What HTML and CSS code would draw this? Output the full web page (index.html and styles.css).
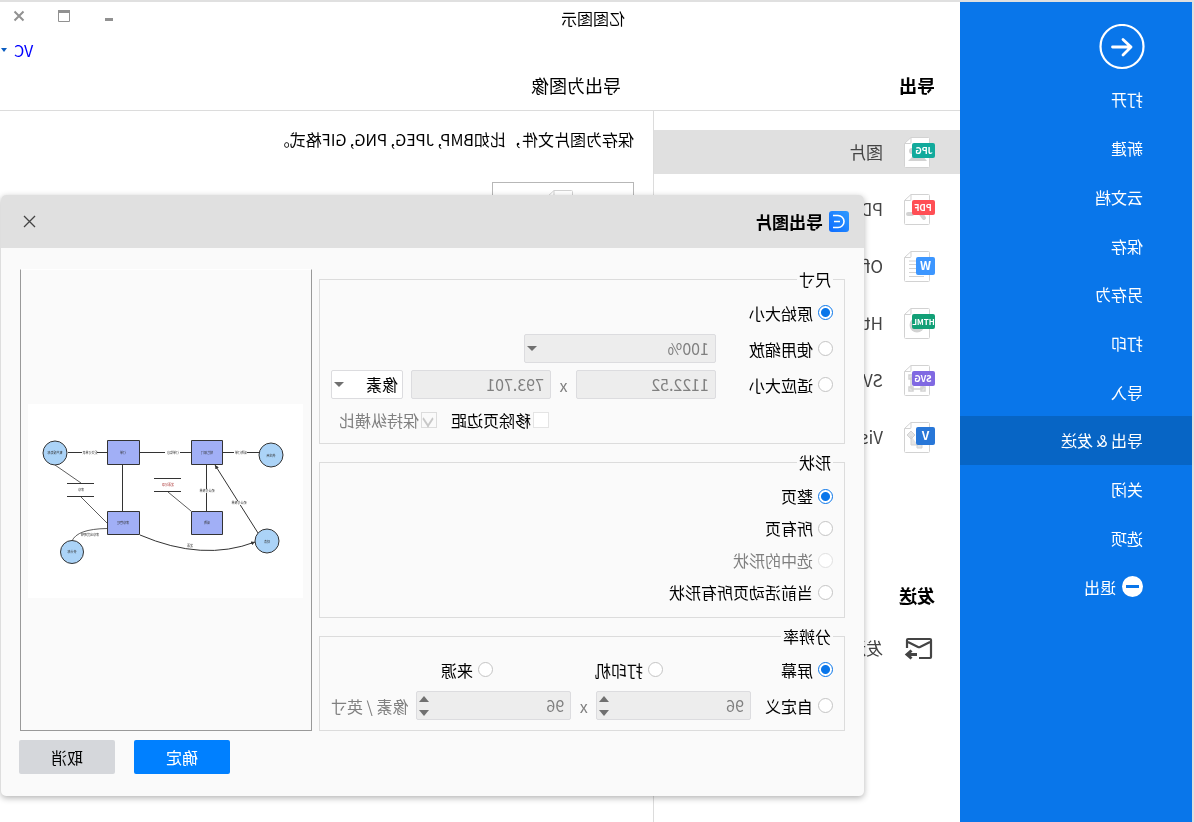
FILE: index.html
```
<!DOCTYPE html>
<html lang="zh-CN">
<head>
<meta charset="utf-8">
<title>亿图图示</title>
<link rel="stylesheet" href="styles.css">
</head>
<body>
<svg class="defs" aria-hidden="true">
  <symbol id="sheet" viewBox="0 0 31 31">
    <path d="M6.500 .5H24L30.500 6.500V29.500a1 1 0 0 1-1 1H6.500a1 1 0 0 1-1-1V1.500a1 1 0 0 1 1-1z" fill="#fff" stroke="#d2d2d2"/>
    <path d="M24 .5V5.500a1 1 0 0 0 1 1H30.500" fill="none" stroke="#d2d2d2"/>
  </symbol>
</svg>
<div class="window">
  <nav class="sidebar">
    <button class="back" aria-label="返回">
      <svg viewBox="0 0 46 46" width="46" height="46" fill="none" stroke="#fff"><circle cx="23" cy="22.500" r="21.500" stroke-width="2.200"/><path d="M32.500 23H14M22 15.500l-8 7.500L22 31" stroke-width="2.800" stroke-linecap="round" stroke-linejoin="round"/></svg>
    </button>
    <div class="menu">
      <a href="#">打开</a>
      <a href="#">新建</a>
      <a href="#">云文档</a>
      <a href="#">保存</a>
      <a href="#">另存为</a>
      <a href="#">打印</a>
      <a href="#">导入</a>
      <a href="#" class="active">导出 &amp; 发送</a>
      <a href="#">关闭</a>
      <a href="#">选项</a>
      <a href="#"><svg width="21" height="21" viewBox="0 0 21 21"><circle cx="10.500" cy="10.500" r="10.500" fill="#fff"/><path d="M4 10.500h13" stroke="#0976ea" stroke-width="3"/></svg>退出</a>
    </div>
  </nav>
  <div class="main">
    <header class="top">
      <div class="titlebar">
        <span>亿图图示</span>
        <div class="controls">
          <button aria-label="最小化"><svg width="12" height="12" viewBox="0 0 12 12"><path d="M2 9.500h8" stroke="#919191" stroke-width="3"/></svg></button>
          <button aria-label="最大化"><svg width="12" height="12" viewBox="0 0 12 12"><path d="M.5 1v10.500h11V1" fill="none" stroke="#919191"/><path d="M0 1.500h12" stroke="#919191" stroke-width="3"/></svg></button>
          <button aria-label="关闭"><svg width="12" height="12" viewBox="0 0 12 12"><path d="M1.500 1.500l9 9M10.500 1.500l-9 9" stroke="#919191" stroke-width="2"/></svg></button>
        </div>
      </div>
      <div class="account"><a href="#">VC</a><i class="tri"></i></div>
      <div class="headings"><h2>导出</h2><h1>导出为图像</h1></div>
    </header>
    <div class="content">
      <div class="formats">
        <a href="#" class="format active">
          <svg width="31" height="31" viewBox="0 0 31 31"><use href="#sheet"/><path d="M8 24l5-6 4 3 4-3 6 6z" fill="#d2d2d2"/><circle cx="23" cy="14" r="3" fill="#d2d2d2"/><rect y="6" width="23" height="15" rx="2" fill="#12aa9c"/><text x="11" y="17">JPG</text></svg>图片</a>
        <a href="#" class="format">
          <svg width="31" height="31" viewBox="0 0 31 31"><use href="#sheet"/><path d="M11 24l3-4M23 20h4" fill="none" stroke="#d2d2d2" stroke-width="4" stroke-linecap="round"/><rect y="6" width="23" height="15" rx="2" fill="#ff4f55"/><text x="12" y="17">PDF</text></svg>PDF</a>
        <a href="#" class="format">
          <svg width="31" height="31" viewBox="0 0 31 31"><use href="#sheet"/><path d="M11 10h15M11 13.500h15M11 17.500h15M11 21.500h15M11 25.500h15" stroke="#d2d2d2"/><rect y="6" width="19" height="18" rx="2" fill="#3c96ff"/><text x="9.500" y="18.500" class="big">W</text></svg>Office</a>
        <a href="#" class="format">
          <svg width="31" height="31" viewBox="0 0 31 31"><use href="#sheet"/><circle cx="18" cy="17" r="7.500" fill="#d2d2d2"/><rect y="6" width="23" height="15" rx="2" fill="#12a077"/><text x="11.500" y="17" class="small">HTML</text></svg>Html</a>
        <a href="#" class="format">
          <svg width="31" height="31" viewBox="0 0 31 31"><use href="#sheet"/><path d="M12 12h12v12H12zM10 22h4v4h-4zM22 22h4v4h-4zM22 10h4v4h-4z" fill="none" stroke="#d2d2d2" stroke-width="1.500"/><rect y="6" width="23" height="15" rx="2" fill="#8069e2"/><text x="12" y="17">SVG</text></svg>SVG</a>
        <a href="#" class="format">
          <svg width="31" height="31" viewBox="0 0 31 31"><use href="#sheet"/><path d="M24 9l4 4-4 4-4-4zM13 22h5v4h-5zM24 14v9h-7" fill="#d2d2d2" stroke="#d2d2d2" fill-opacity=".6"/><rect y="5" width="19" height="18" rx="2" fill="#2877d8"/><text x="9.500" y="18" class="big">V</text></svg>Visio</a>
        <h2>发送</h2>
        <a href="#" class="format">
          <svg width="31" height="31" viewBox="0 0 31 31" fill="none" stroke="#444" stroke-width="2.200"><path d="M16 25H5a1 1 0 0 1-1-1V7a1 1 0 0 1 1-1h22a1 1 0 0 1 1 1v8M5 9l10 5q1 .5 2 0l10-5"/><path d="M18 21.500h10M23.500 17.500l4.500 4-4.500 4" stroke-width="3"/></svg>发送</a>
      </div>
      <section class="detail">
        <p>保存为图片文件，比如BMP, JPEG, PNG, GIF格式。</p>
        <button class="tile" aria-label="图片"><svg width="31" height="31"><use href="#sheet" width="31" height="31"/></svg></button>
      </section>
    </div>
  </div>

  <form class="dialog" role="dialog" aria-label="导出图片">
    <header>
      <svg width="20" height="21" viewBox="0 0 20 21"><defs><linearGradient id="lg" x1="0" y1="0" x2="1" y2="1"><stop stop-color="#2f9bff"/><stop offset="1" stop-color="#0d6bff"/></linearGradient></defs><rect width="20" height="21" rx="3" fill="url(#lg)"/><path d="M16 4.500h-5a6 6 0 0 0 0 12H16M9 10.500h6" fill="none" stroke="#fff" stroke-width="1.600"/></svg>
      <h3>导出图片</h3>
      <button type="button" aria-label="关闭"><svg width="13" height="13" viewBox="0 0 13 13"><path d="M1 1l11 11M12 1L1 12" stroke="#444" stroke-width="1.300"/></svg></button>
    </header>
    <div class="panes">
      <div class="groups">
        <fieldset class="size">
          <legend>尺寸</legend>
          <div class="row"><label><input type="radio" name="size" checked>原始大小</label></div>
          <div class="row"><label><input type="radio" name="size">使用缩放</label><span class="drop zoom"><select disabled aria-label="缩放"><option>100%</option></select></span></div>
          <div class="row"><label><input type="radio" name="size">适应大小</label><input type="text" disabled value="1122.52" aria-label="宽度"><span class="by">x</span><input type="text" disabled value="793.701" aria-label="高度"><span class="drop unit"><select aria-label="单位"><option>像素</option></select></span></div>
          <div class="row checks"><label><input type="checkbox">移除页边距</label><label class="off"><input type="checkbox" checked disabled>保持纵横比</label></div>
        </fieldset>
        <fieldset class="shape">
          <legend>形状</legend>
          <div class="row"><label><input type="radio" name="shape" checked>整页</label></div>
          <div class="row"><label><input type="radio" name="shape">所有页</label></div>
          <div class="row"><label class="off"><input type="radio" name="shape" disabled>选中的形状</label></div>
          <div class="row"><label><input type="radio" name="shape">当前活动页所有形状</label></div>
        </fieldset>
        <fieldset class="dpi">
          <legend>分辨率</legend>
          <div class="row sources"><label><input type="radio" name="dpi" checked>屏幕</label><label><input type="radio" name="dpi">打印机</label><label><input type="radio" name="dpi">来源</label></div>
          <div class="row"><label><input type="radio" name="dpi">自定义</label><span class="spin"><input type="number" disabled value="96" aria-label="水平分辨率"></span><span class="by">x</span><span class="spin"><input type="number" disabled value="96" aria-label="垂直分辨率"></span><span class="per">像素 / 英寸</span></div>
        </fieldset>
      </div>
      <div class="preview">
        <svg viewBox="0 0 275 194" fill="none" stroke="#333">
          <defs><marker id="tip" viewBox="0 0 4 4" refX="4" refY="2" markerWidth="4" markerHeight="4" orient="auto"><path d="M0 0l4 2-4 2z" fill="#333" stroke="none"/></marker></defs>
          <rect width="275" height="194" fill="#fff" stroke="none"/>
          <path d="M235 48.500H196M163 48.500H112M80 48.500H44"/>
          <path d="M180.500 61V107M96.500 61V107M45 129L88 61" marker-end="url(#tip)"/>
          <path d="M209 79.500h27M209 92.500h27M122 74.500h27M122 87.500h27"/>
          <path d="M248 61L222 79M222 93L196 119M135 88L112 107" stroke-width=".8"/>
          <path d="M163 131Q100 158 48 138" marker-end="url(#tip)"/>
          <path d="M231 137Q226 125 196 124.500" stroke-width=".8"/>
          <g fill="#a1aff6"><path d="M163.500 36.500h32v24h-32zM80.500 36.500h31v24h-31zM163.500 107.500h32v23h-32zM80.500 107.500h31v23h-31z"/></g>
          <g fill="#abd3f7"><circle cx="248" cy="49" r="12"/><circle cx="32" cy="51" r="12"/><circle cx="36" cy="137" r="12"/><circle cx="231" cy="148" r="11.500"/></g>
          <g stroke="none" fill="#fff"><path d="M206 47h15v4h-15zM123 47h15v4h-15zM56 47h13v4H56zM89 85h15v4H89zM57 97h14v4H57z"/></g>
          <g class="tiny">
            <text x="248" y="50">客户服务部</text><text x="180" y="50">订单</text><text x="96" y="50">销售部门</text><text x="32" y="53">供应商</text>
            <text x="180" y="120">库存管理</text><text x="96" y="120">采购</text><text x="36" y="139">财务</text><text x="231" y="149">会计部</text>
            <text x="213" y="50">提交订单表</text><text x="130" y="50">订单信息</text><text x="62" y="50">采购订单</text>
            <text x="222" y="87">库存</text><text x="135" y="82" class="red">发票记录</text><text x="96" y="88">确认付款单</text>
            <text x="64" y="100">确认付款单</text><text x="213" y="132">库存出货明细</text><text x="113" y="143">发票</text>
          </g>
        </svg>
      </div>
    </div>
    <footer><button type="button" class="ok">确定</button><button type="button" class="cancel">取消</button></footer>
  </form>
</div>
</body>
</html>
```
FILE: styles.css
```
* { box-sizing: border-box; }
body {
  margin: 0;
  background: #fff;
  color: #000;
  font: 16px/20px "Noto Sans CJK SC", sans-serif;
  overflow: hidden;
}
h1, h2, h3, p { margin: 0; font-size: 18px; line-height: 24px; }
h1 { font-weight: 400; }
a { color: inherit; text-decoration: none; }
button { border: 0; padding: 0; background: none; font: inherit; color: inherit; }
input, select { font: inherit; margin: 0; }
svg { flex: none; display: block; }
.defs { position: absolute; width: 0; height: 0; }

/* Right-to-left mirrored window */
.window {
  position: relative;
  display: flex;
  min-height: 100vh;
  border-top: 2px solid #e0e0e0;
  border-left: 2px solid #e0e0e0;
  transform: scaleX(-1);
}
.sidebar { width: 232px; flex: none; background: #0976ea; color: #fff; padding-top: 22px; }
.back { display: block; margin-left: 47px; }
.menu { display: grid; grid-auto-rows: 1fr; height: 536px; margin-top: 5px; }
.menu a { display: flex; align-items: center; gap: 6px; padding-left: 49px; }
.menu .active { background: #0765c5; }

.main { flex: 1; min-width: 0; display: flex; flex-direction: column; }
.top { border-bottom: 1px solid #dcdcdc; }
.titlebar { display: flex; justify-content: space-between; align-items: center; height: 32px; padding: 0 13px 0 335px; }
.controls { display: flex; gap: 33px; align-items: center; padding-bottom: 4px; }
.account { display: flex; justify-content: flex-end; align-items: center; gap: 7px; height: 32px; padding-right: 1px; color: #00f; }
.tri { border: 3px solid transparent; border-top: 4px solid #0a5cc0; border-bottom: 0; }
.headings { display: grid; grid-template-columns: 314px 1fr; padding: 7px 0 13px 25px; }

.content { flex: 1; display: grid; grid-template-columns: 307px 1fr; }
.formats { border-right: 1px solid #dcdcdc; padding-top: 19px; }
.format { display: flex; align-items: center; gap: 21px; height: 44px; margin-bottom: 13px; padding-left: 25px; font-size: 17px; color: #444; }
.format.active { background: #e0e0e0; }
.format text { font-size: 9px; font-weight: 700; fill: #fff; text-anchor: middle; }
.format .big { font-size: 12px; }
.format .small { font-size: 8px; }
.formats h2 { margin: 124px 0 19px 25px; }
.detail { padding: 18px 19px; }
.detail p { font-size: 16px; line-height: 20px; }
.tile { display: flex; justify-content: center; width: 142px; height: 120px; margin-top: 33px; padding-top: 7px; border: 1px solid #b7b7b7; }

/* Export dialog */
.dialog {
  position: absolute;
  top: 193px;
  left: 328px;
  right: 1px;
  border-radius: 5px;
  background: #fafafa;
  box-shadow: 0 2px 6px rgba(0, 0, 0, .3);
}
.dialog header { display: flex; align-items: center; height: 53px; padding: 0 22px 0 15px; border-radius: 5px 5px 0 0; background: #e0e0e0; }
.dialog h3 { flex: 1; margin-left: 6px; font-size: 17px; }
.panes { display: grid; grid-template-columns: 1fr 292px; gap: 7px; padding: 21px 19px 0; }
.groups { display: grid; gap: 8px; }
fieldset { min-width: 0; margin: 0; padding: 9px 11px 10px 11px; border: 1px solid #dcdcdc; }
legend { padding: 0 2px; }
.row { display: flex; align-items: center; height: 29px; margin-bottom: 7px; }
.row:last-child { margin-bottom: 0; }
.row label { display: flex; align-items: center; gap: 5px; flex: none; }
.size .row label { width: 117px; }
.size .checks { height: 20px; margin: 11px 0 3px; padding-left: 284px; }
.size .checks label { width: 112px; gap: 2px; }
.shape { padding: 8px 11px 9px; }
.shape .row { height: 32px; margin: 0; }
.dpi .row label { width: 82px; }
.dpi .sources label { width: 170px; }
.off, .by, .per { color: #808080; }
.by { width: 25px; flex: none; text-align: center; }
.per { margin-left: 8px; flex: none; }

input[type=radio] { appearance: none; width: 15px; height: 15px; border: 1px solid #c4c4c4; border-radius: 50%; background: #fff; }
input[type=radio]:checked { border-color: #0976ea; background: radial-gradient(circle, #0976ea 4px, #fff 5px); }
input[type=radio]:disabled { border-color: #e0e0e0; background: #fff; }
input[type=checkbox] { appearance: none; position: relative; width: 16px; height: 16px; border: 1px solid #e4e4e4; background: #fff; }
input[type=checkbox]:disabled { border-color: #dcdcdc; background: #fafafa; }
input[type=checkbox]:checked::after { content: ""; position: absolute; left: 3px; top: 1px; width: 8px; height: 8px; border: solid #c8c8c8; border-width: 0 2px 2px 0; transform: rotate(45deg) skew(12deg, 12deg); }
input[type=text], input[type=number], select {
  appearance: none;
  flex: 1;
  min-width: 0;
  width: 100%;
  height: 29px;
  padding: 0 6px 2px;
  border: 1px solid #dcdcdf;
  border-radius: 2px;
  background: #fff;
  color: #000;
}
input[type=number] { appearance: textfield; }
input[type=text]:disabled, input[type=number]:disabled, select:disabled { background: #ededed; color: #808080; opacity: 1; }
.drop, .spin { position: relative; display: flex; }
.drop::after { content: ""; position: absolute; right: 3px; top: 12px; border: 5px solid transparent; border-top-color: #707070; border-bottom: 0; }
.zoom { width: 192px; }
.unit { width: 72px; margin-left: 8px; }
.unit select { padding-left: 4px; }
.spin { flex: 1; }
.spin::before, .spin::after { content: ""; position: absolute; right: 3px; border: 5px solid transparent; }
.spin::before { top: 5px; border-top: 0; border-bottom: 6px solid #707070; }
.spin::after { bottom: 4px; border-bottom: 0; border-top: 6px solid #707070; }

.preview { display: flex; align-items: center; padding: 2px 7px 0 8px; border: 1px solid #999; border-top-color: #fff; }
.preview svg { width: 100%; }
.tiny text { font-size: 3px; fill: #333; stroke: none; text-anchor: middle; }
.tiny .red { fill: #a33; }

.dialog footer { display: flex; justify-content: flex-end; gap: 19px; padding: 9px 18px 22px; }
.dialog footer button { width: 96px; height: 34px; border-radius: 2px; }
.ok { background: #0080ff; color: #fff; }
.cancel { background: #d5d7db; }
```
